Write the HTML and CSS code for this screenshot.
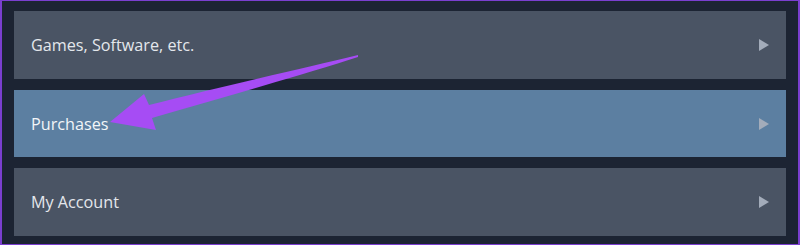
FILE: index.html
```html
<!DOCTYPE html>
<html>
<head>
  <meta charset="UTF-8">
  <title>Account Menu</title>
  <link rel="stylesheet" href="styles.css">
</head>
<body>
  <div class="frame">
    <div class="menu">
      <div class="item">Games, Software, etc.<span class="chev"></span></div>
      <div class="item active">Purchases<span class="chev"></span></div>
      <div class="item">My Account<span class="chev"></span></div>
    </div>
    <svg class="arrow" width="800" height="245" viewBox="0 0 800 245">
      <path d="M358 55 C300 69 220 87 149 105 L144 94 L110 122 L156 130 L152 118 C225 97 305 74 358 57 Z" fill="#a64cf4"/>
    </svg>
  </div>
</body>
</html>
```

FILE: styles.css
```css
body { margin:0; background:#7a3fcf; font-family:"Open Sans", "Noto Sans", sans-serif; }
.frame { position:relative; height:245px; }
.menu { display:flex; flex-direction:column; gap:11px; background:#1c2433; margin:0 2px 0 2px; padding:10px 12px 8px 12px; height:225px; border-top:1px solid #7a3fcf; }
.item { display:flex; align-items:center; justify-content:space-between; height:68px; padding:0 17px 0 17px; background:#4a5464; color:#e4e7ec; font-size:16.2px; }
.item.active { background:#5c7fa1; color:#f2f5f8; }
.chev { width:0; height:0; border-top:6px solid transparent; border-bottom:6px solid transparent; border-left:10px solid #a3acba; }
.arrow { position:absolute; left:0; top:0; }
```
